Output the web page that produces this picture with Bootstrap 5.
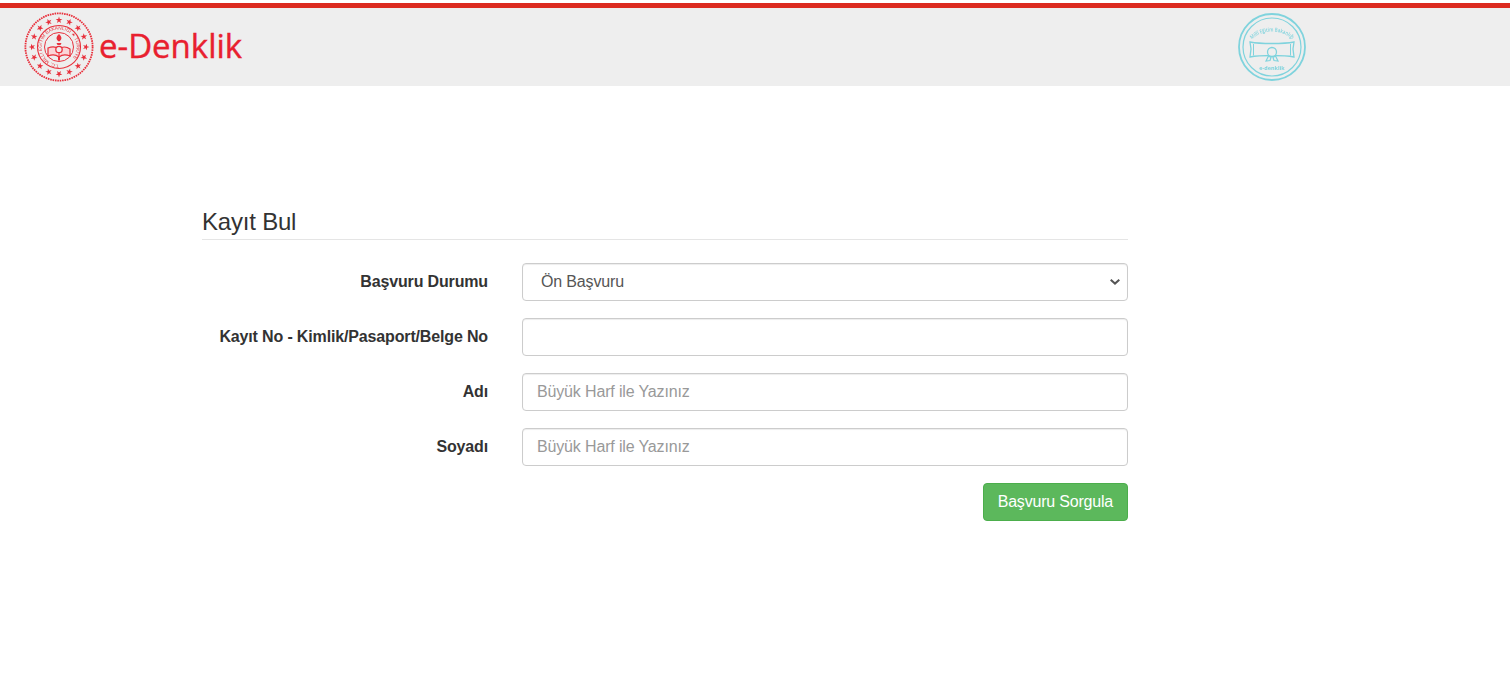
<!DOCTYPE html>
<html lang="tr">
<head>
    <meta charset="UTF-8">
    <meta name="viewport" content="width=device-width, initial-scale=1.0">
    <title>e-Denklik</title>
    <link rel="stylesheet" href="https://cdn.jsdelivr.net/npm/bootstrap@5.3.0/dist/css/bootstrap.min.css">
    <style>
        body {
            background-color: #fff;
            color: #333;
            font-family: "Liberation Sans", Arial, sans-serif;
            font-size: 16px;
            letter-spacing: -.15px;
            padding-top: 3px;
        }
        .site-header {
            background-color: #eee;
            border-top: 5px solid #dc2a1f;
            height: 83px;
            padding-left: 24px;
        }
        .brand-left {
            filter: blur(.3px);
        }
        .brand-text {
            color: #e8202e;
            font-family: "Open Sans", sans-serif;
            font-size: 33px;
            letter-spacing: 0;
            line-height: 1;
            margin-left: 5px;
            margin-top: -3px;
            -webkit-text-stroke: .4px #e8202e;
        }
        .brand-right {
            filter: blur(.3px);
            margin-left: 996px;
        }
        .form-wrap {
            width: 926px;
            margin-left: 202px;
            padding-top: 123px;
        }
        .form-title {
            font-size: 24px;
            font-weight: 400;
            letter-spacing: -.2px;
            line-height: 26px;
            color: #333;
            padding-bottom: 4px;
            border-bottom: 1px solid #e5e5e5;
            margin-bottom: 23px;
        }
        .form-line {
            margin-bottom: 17px;
        }
        .form-caption {
            width: 286px;
            text-align: right;
            font-weight: 700;
            margin: 0 34px 0 0;
            flex-shrink: 0;
        }
        .form-wrap .form-control,
        .form-wrap .form-select {
            height: 38px;
            border-color: #ccc;
            border-radius: 4px;
            color: #555;
            font-size: 16px;
            letter-spacing: -.15px;
            box-shadow: inset 0 1px 1px rgba(0, 0, 0, .075);
        }
        .form-wrap .form-control {
            padding: 6px 14px;
        }
        .form-wrap .form-select {
            padding: 6px 36px 6px 18px;
            background-image: url("data:image/svg+xml,%3csvg xmlns='http://www.w3.org/2000/svg' viewBox='0 0 10 6'%3e%3cpath fill='none' stroke='%23555' stroke-width='2' d='M.7.8 5 4.6 9.3.8'/%3e%3c/svg%3e");
            background-position: right 7px center;
            background-size: 10px 6px;
        }
        .form-wrap .form-control::placeholder {
            color: #999;
            opacity: 1;
        }
        .btn-query {
            background-color: #5cb85c;
            border: 1px solid #4cae4c;
            border-radius: 4px;
            color: #fff;
            font-size: 16px;
            letter-spacing: -.2px;
            height: 38px;
            padding: 6px 14px;
        }
    </style>
</head>
<body>
    <header class="site-header d-flex align-items-center">
        <svg class="brand-left" width="70" height="70" viewBox="0 0 70 70" fill="none" stroke="#e8303c">
            <defs>
                <polygon id="star" points="35,4.6 35.8,7 38.3,7 36.3,8.5 37,10.9 35,9.4 33,10.9 33.7,8.5 31.7,7 34.2,7" fill="#e8303c" stroke="none"/>
            </defs>
            <circle cx="35" cy="35" r="33.6" stroke-width="1.8" stroke-dasharray="1.6 .8"/>
            <use href="#star"/>
            <use href="#star" transform="rotate(22.5 35 35)"/>
            <use href="#star" transform="rotate(45 35 35)"/>
            <use href="#star" transform="rotate(67.5 35 35)"/>
            <use href="#star" transform="rotate(90 35 35)"/>
            <use href="#star" transform="rotate(112.5 35 35)"/>
            <use href="#star" transform="rotate(135 35 35)"/>
            <use href="#star" transform="rotate(157.5 35 35)"/>
            <use href="#star" transform="rotate(180 35 35)"/>
            <use href="#star" transform="rotate(202.5 35 35)"/>
            <use href="#star" transform="rotate(225 35 35)"/>
            <use href="#star" transform="rotate(247.5 35 35)"/>
            <use href="#star" transform="rotate(270 35 35)"/>
            <use href="#star" transform="rotate(292.5 35 35)"/>
            <use href="#star" transform="rotate(315 35 35)"/>
            <use href="#star" transform="rotate(337.5 35 35)"/>
            <circle cx="35" cy="35" r="21.5" stroke-width="1.1"/>
            <circle cx="35" cy="35" r="14.5" stroke-width="1"/>
            <path id="ringArc" d="M35 52.5a17.5 17.5 0 1 1 .01 0" stroke="none"/>
            <text font-size="4.6" font-family="'Liberation Sans', sans-serif" fill="#e8303c" stroke="none" letter-spacing=".1"><textPath href="#ringArc">T.C. MİLLÎ EĞİTİM BAKANLIĞI ★ TÜRKİYE</textPath></text>
            <path d="M24 36c3.500-1.500 8-1.500 11 1 3-2.500 7.500-2.500 11 0v7c-3.500-1.500-8-1.500-11 1-3-2.500-7.500-2.500-11-1z" fill="#fbd5d7" stroke-width="1.2"/>
            <path d="M35 37v8" stroke-width="1"/>
            <path d="M35 22c-3 2.800-3.200 5-.8 7.200h1.600c2.400-2.200 2.200-4.400-.8-7.200zM32.500 31h5l-1 2h-3z" fill="#e8303c" stroke="none"/>
            <circle cx="35" cy="37.500" r="3.200" fill="#eee" stroke-width="1.300"/>
            <path d="M35 45v3.500" stroke-width="2"/>
        </svg>
        <span class="brand-text">e-Denklik</span>
        <svg class="brand-right" width="68" height="68" viewBox="0 0 68 68" fill="none" stroke="#7fd3dd">
            <circle cx="34" cy="34" r="33" stroke-width="1.800"/>
            <circle cx="34" cy="34" r="29" stroke-width="1.200"/>
            <path id="sealArc" d="M13 27A30 30 0 0 1 55 27" stroke="none"/>
            <text font-size="5.500" font-weight="600" font-family="'Open Sans', sans-serif" fill="#7fd3dd" stroke="none" text-anchor="middle" letter-spacing="0"><textPath href="#sealArc" startOffset="50%" textLength="44" lengthAdjust="spacingAndGlyphs">Millî Eğitim Bakanlığı</textPath></text>
            <path d="M12 29c10 2 34 2 44 0l-1 7 1 8c-10-2-34-2-44 0l1-8z" stroke-width="1.300"/>
            <path d="M15.500 31v11.500M52.500 31v11.500" stroke-width="1"/>
            <circle cx="34" cy="39" r="4.500" fill="#eee" stroke-width="1.300"/>
            <path d="M30.500 43l-2.500 5 4-.5 1-3zM37.500 43l2.500 5-4-.5-1-3z" fill="#eee" stroke-width="1.200"/>
            <text x="34" y="56.500" font-size="5.500" font-weight="700" font-family="'Open Sans', sans-serif" fill="#7fd3dd" stroke="none" text-anchor="middle" letter-spacing="0">e-denklik</text>
        </svg>
    </header>

    <main class="form-wrap">
        <h1 class="form-title">Kayıt Bul</h1>
        <form>
            <div class="form-line d-flex align-items-center">
                <label class="form-caption" for="durum">Başvuru Durumu</label>
                <select class="form-select" id="durum">
                    <option>Ön Başvuru</option>
                </select>
            </div>
            <div class="form-line d-flex align-items-center">
                <label class="form-caption" for="kayitNo">Kayıt No - Kimlik/Pasaport/Belge No</label>
                <input type="text" class="form-control" id="kayitNo">
            </div>
            <div class="form-line d-flex align-items-center">
                <label class="form-caption" for="adi">Adı</label>
                <input type="text" class="form-control" id="adi" placeholder="Büyük Harf ile Yazınız">
            </div>
            <div class="form-line d-flex align-items-center">
                <label class="form-caption" for="soyadi">Soyadı</label>
                <input type="text" class="form-control" id="soyadi" placeholder="Büyük Harf ile Yazınız">
            </div>
            <div class="d-flex justify-content-end">
                <button type="button" class="btn btn-query">Başvuru Sorgula</button>
            </div>
        </form>
    </main>

    <script src="https://cdn.jsdelivr.net/npm/bootstrap@5.3.0/dist/js/bootstrap.bundle.min.js"></script>
</body>
</html>
